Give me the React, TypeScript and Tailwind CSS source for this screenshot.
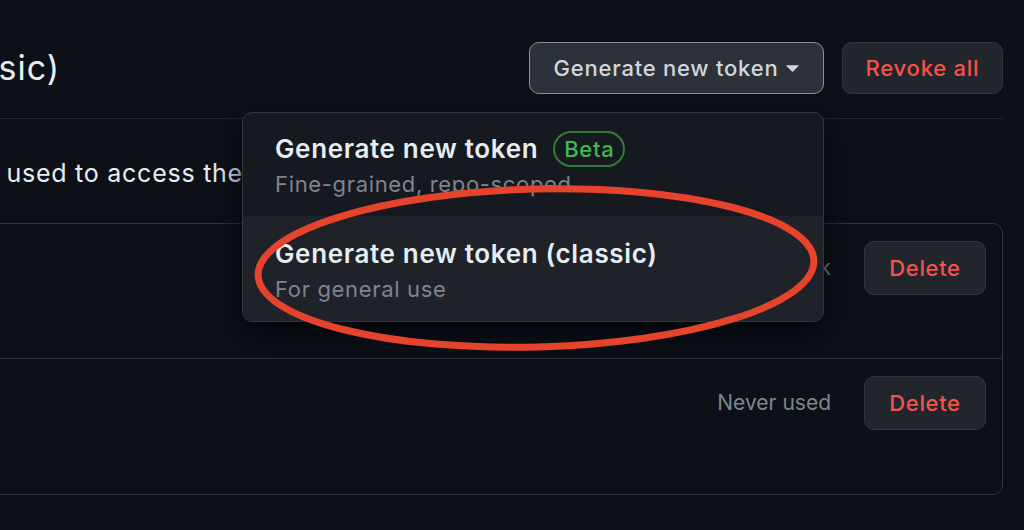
import React from 'react';

const Caret: React.FC = () => (
  <svg viewBox="4.3 6.9 7.4 4.1" width="13" height="7" className="fill-current shrink-0">
    <path d="m4.427 7.427 3.396 3.396a.25.25 0 0 0 .354 0l3.396-3.396A.25.25 0 0 0 11.396 7H4.604a.25.25 0 0 0-.177.427Z" />
  </svg>
);

const DeleteButton: React.FC = () => (
  <button className="h-[54px] w-[122px] rounded-[10px] border border-[#30363d] bg-[#21262d] text-[22px] font-medium tracking-[0.03em] text-[#f85149]">
    Delete
  </button>
);

const TokenRow: React.FC<{ name: string; scopes: string; lastUsed: string; last?: boolean }> = ({ name, scopes, lastUsed, last }) => (
  <div className={`flex h-[135px] items-start justify-between pl-[24px] pr-[16px] pt-[17px] ${last ? '' : 'border-b border-[#30363d]'}`}>
    <div className="pt-[10px]">
      <div className="text-[22px] font-semibold text-[#2f81f7]">{name}</div>
      <div className="text-[20px] text-[#7d8590]">{scopes}</div>
    </div>
    <div className="flex items-center gap-[33px]">
      <span className="text-[21px] text-[#7d8590]">{lastUsed}</span>
      <DeleteButton />
    </div>
  </div>
);

export default function App() {
  return (
    <div className="relative flex h-[530px] w-[1024px] justify-end overflow-hidden bg-[#0d1117] font-['Inter',sans-serif]">
      <div className="mr-[21px] w-[1499px] shrink-0 pt-[42px]">
        <div className="flex items-center justify-between border-b border-[#21262d] pb-[24px]">
          <h2 className="whitespace-nowrap text-[34px] leading-[52px] tracking-[0.03em] text-[#e6edf3]">Personal access tokens (classic)</h2>
          <div className="flex gap-[18px]">
            <div className="relative">
              <button className="flex h-[52px] w-[295px] items-center justify-center gap-[8px] rounded-[10px] border border-[#8b9198] bg-[#2d3139] text-[22px] font-medium tracking-[0.035em] text-[#d0d7de]">
                Generate new token
                <Caret />
              </button>
              <div className="absolute right-0 top-[70px] z-10 w-[582px] overflow-hidden rounded-[10px] border border-[#30363d] bg-[#161a20] shadow-[0_12px_32px_rgba(1,4,9,0.85)]">
                <div className="px-[32px] pb-[15px] pt-[18px]">
                  <div className="flex items-center gap-[15px]">
                    <span className="text-[26px] font-semibold leading-[36px] tracking-[0.025em] text-[#e6edf3]">Generate new token</span>
                    <span className="rounded-full border-2 border-[#2f7d38] px-[9px] text-[22px] font-medium leading-[32px] tracking-[0.03em] text-[#3fb950]">Beta</span>
                  </div>
                  <div className="text-[22px] leading-[34px] tracking-[0.03em] text-[#7d8590]">Fine-grained, repo-scoped</div>
                </div>
                <div className="bg-[#1f2329] px-[32px] pb-[15px] pt-[20px]">
                  <div className="text-[26px] font-semibold leading-[36px] tracking-[0.025em] text-[#e6edf3]">Generate new token (classic)</div>
                  <div className="text-[22px] leading-[34px] tracking-[0.03em] text-[#7d8590]">For general use</div>
                </div>
              </div>
            </div>
            <button className="h-[52px] w-[161px] rounded-[10px] border border-[#30363d] bg-[#21262d] text-[22px] font-medium tracking-[0.035em] text-[#f85149]">
              Revoke all
            </button>
          </div>
        </div>
        <p className="ml-[1px] mt-[39px] whitespace-nowrap text-[25px] leading-[30px] tracking-[0.03em] text-[#e6edf3]">
          Tokens you have generated that can be used to access the GitHub API.
        </p>
        <div className="mt-[35px] rounded-[10px] border border-[#30363d]">
          <TokenRow name="deploy-bot" scopes="— repo, workflow" lastUsed="Last used within the last week" />
          <TokenRow name="local-cli" scopes="— read:packages" lastUsed="Never used" last />
        </div>
      </div>
      <svg className="pointer-events-none absolute left-0 top-0 z-20" width="1024" height="530">
        <ellipse cx="536" cy="268" rx="278" ry="79" transform="rotate(-1.5 536 268)" fill="none" stroke="#e5432b" strokeWidth="7" />
      </svg>
    </div>
  );
}
